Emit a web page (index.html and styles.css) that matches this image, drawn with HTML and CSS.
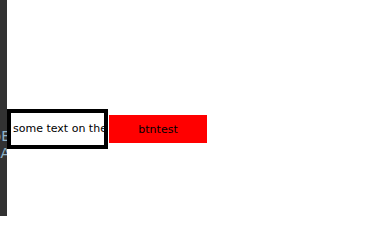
FILE: index.html
```html
<!DOCTYPE html>
<html>
<head>
<meta charset="utf-8">
<link rel="stylesheet" href="styles.css">
</head>
<body>
<div class="page">
  <aside class="strip">
    <div class="strip-text">
      <span class="line">bE</span>
      <span class="line">LA</span>
    </div>
  </aside>
  <main class="stage">
    <div class="row">
      <div class="textbox">some text on the</div>
      <button class="btn">btntest</button>
    </div>
  </main>
</div>
</body>
</html>
```
FILE: styles.css
```css
html, body {
  margin: 0;
  padding: 0;
  background: #ffffff;
}
.page {
  display: flex;
  width: 383px;
  height: 216px;
  overflow: hidden;
}
.strip {
  width: 7px;
  flex: none;
  background: #323232;
  overflow: hidden;
  display: flex;
  flex-direction: column;
  align-items: flex-end;
  padding-top: 128px;
  box-sizing: border-box;
}
.strip-text {
  display: flex;
  flex-direction: column;
  align-items: flex-end;
  font-family: "DejaVu Sans", sans-serif;
  font-size: 14px;
  line-height: 17px;
  color: #8fb3c9;
  white-space: nowrap;
}
.line {
  margin-right: -3px;
}
.stage {
  flex: 1;
  padding-top: 109px;
}
.row {
  display: flex;
  align-items: center;
  gap: 1px;
}
.textbox {
  box-sizing: border-box;
  width: 101px;
  height: 40px;
  border: 4px solid #000000;
  background: #ffffff;
  overflow: hidden;
  white-space: nowrap;
  font-family: "DejaVu Sans", sans-serif;
  font-size: 11px;
  line-height: 32px;
  color: #000000;
  padding-left: 2px;
}
.btn {
  box-sizing: border-box;
  width: 98px;
  height: 28px;
  margin: 0;
  padding: 0;
  border: none;
  background: #ff0000;
  color: #000000;
  font-family: "DejaVu Sans", sans-serif;
  font-size: 11px;
}
```
